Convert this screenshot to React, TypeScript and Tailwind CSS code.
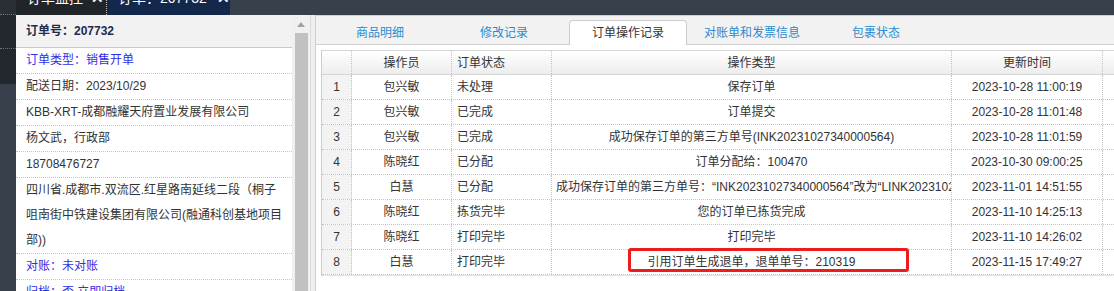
import React from "react";

const rows: [number, string, string, string, string][] = [
  [1, "包兴敏", "未处理", "保存订单", "2023-10-28 11:00:19"],
  [2, "包兴敏", "已完成", "订单提交", "2023-10-28 11:01:48"],
  [3, "包兴敏", "已完成", "成功保存订单的第三方单号(INK20231027340000564)", "2023-10-28 11:01:59"],
  [4, "陈晓红", "已分配", "订单分配给：100470", "2023-10-30 09:00:25"],
  [5, "白慧", "已分配", "成功保存订单的第三方单号：“INK20231027340000564”改为“LINK20231027340000564”", "2023-11-01 14:51:55"],
  [6, "陈晓红", "拣货完毕", "您的订单已拣货完成", "2023-11-10 14:25:13"],
  [7, "陈晓红", "打印完毕", "打印完毕", "2023-11-10 14:26:02"],
  [8, "白慧", "打印完毕", "引用订单生成退单，退单单号：210319", "2023-11-15 17:49:27"],
];

const tabs = ["商品明细", "修改记录", "订单操作记录", "对账单和发票信息", "包裹状态"];

export default function App() {
  return (
    <div className="w-[1114px] h-[291px] overflow-hidden flex bg-white text-[12px] text-[#333] font-['Liberation_Sans','Noto_Sans_CJK_SC',sans-serif]">
      {/* left strip */}
      <div className="w-[16px] shrink-0 flex flex-col bg-[#37404b]">
        <div className="h-[15px] bg-[#2a2f36] border-b border-dotted border-[#6b7079]" />
        <div className="h-[34px] bg-[#23282e] border-b border-dotted border-[#6b7079]" />
        <div className="h-[35px] bg-[#23282e]" />
      </div>

      <div className="flex-1 flex flex-col min-w-0">
        {/* top tabs */}
        <div className="h-[15px] shrink-0 flex bg-[#37404b] overflow-hidden">
          <div className="w-[91px] bg-[#212428] border-r border-dotted border-[#c0c0c0] text-white text-[14px]">
            <div className="h-[30px] -mt-[17px] flex items-center pl-[11px] gap-[8px]">
              <span>订单监控</span>
              <span className="font-bold text-[15px]">✕</span>
            </div>
          </div>
          <div className="w-[123px] bg-[#13284b] text-white text-[14px]">
            <div className="h-[30px] -mt-[17px] flex items-center pl-[11px] gap-[10px]">
              <span>订单：207732</span>
              <span className="font-bold text-[15px]">✕</span>
            </div>
          </div>
        </div>

        <div className="flex-1 flex min-h-0">
          {/* left panel */}
          <div className="w-[276px] shrink-0 bg-white flex flex-col">
            <div className="h-[33px] shrink-0 bg-[#f2f2f2] border-b border-[#c8c8c8] flex items-center pl-[10px] font-bold text-[#1f2c4f]">
              订单号：207732
            </div>
            <div className="px-[10px] leading-[25px] border-b border-dotted border-[#c4c4c4] text-[#2f2fe8]">订单类型：销售开单</div>
            <div className="px-[10px] leading-[25px] border-b border-dotted border-[#c4c4c4]">配送日期：2023/10/29</div>
            <div className="px-[10px] leading-[25px] border-b border-dotted border-[#c4c4c4] whitespace-nowrap">KBB-XRT-成都融耀天府置业发展有限公司</div>
            <div className="px-[10px] leading-[25px] border-b border-dotted border-[#c4c4c4]">杨文武，行政部</div>
            <div className="px-[10px] leading-[25px] border-b border-dotted border-[#c4c4c4]">18708476727</div>
            <div className="px-[10px] leading-[25px] border-b border-dotted border-[#c4c4c4] whitespace-nowrap">
              <div>四川省.成都市.双流区.红星路南延线二段（桐子</div>
              <div>咀南街中铁建设集团有限公司(融通科创基地项目</div>
              <div>部))</div>
            </div>
            <div className="px-[10px] leading-[25px] border-b border-dotted border-[#c4c4c4] text-[#2f2fe8]">对账：未对账</div>
            <div className="px-[10px] leading-[25px] border-b border-dotted border-[#c4c4c4] text-[#2f2fe8]">归档：否 立即归档</div>
          </div>

          {/* scrollbar */}
          <div className="w-[18px] shrink-0 bg-[#f0f0f0] flex flex-col items-center">
            <div className="h-[18px] w-full flex items-center justify-center">
              <svg width="8" height="5" viewBox="0 0 8 5">
                <polygon points="4,0 8,5 0,5" fill="#a3a3a3" />
              </svg>
            </div>
            <div className="w-[13px] flex-1 bg-[#c1c1c1]" />
          </div>
          <div className="w-[1px] shrink-0 bg-[#dcdcdc]" />
          <div className="w-[4px] shrink-0 bg-[#eeeeee]" />

          {/* right panel */}
          <div className="flex-1 min-w-0 flex flex-col bg-white border-l border-[#cfcfcf]">
            <div className="h-[30px] shrink-0 bg-[#f2f2f2] border-t border-b border-[#d0d0d0] flex items-end pl-[5px] gap-[6px]">
              {tabs.map((t, i) =>
                i === 2 ? (
                  <div
                    key={t}
                    className="w-[118px] h-[25px] -mb-[1px] bg-white border border-b-0 border-[#cccccc] rounded-t-[4px] flex items-center justify-center text-[#333]"
                  >
                    {t}
                  </div>
                ) : (
                  <div key={t} className="w-[118px] h-[25px] -mb-[1px] flex items-center justify-center text-[#2a8bd0]">
                    {t}
                  </div>
                )
              )}
            </div>

            {/* table */}
            <div className="mt-[5px] ml-[5px] border-l border-[#cccccc] flex flex-col">
              <div className="h-[25px] flex border-t border-b border-[#d6d6d6] bg-linear-to-b from-white to-[#ededed]">
                <div className="w-[30px] shrink-0 border-r border-dotted border-[#c4c4c4]" />
                <div className="w-[100px] shrink-0 border-r border-dotted border-[#c4c4c4] flex items-center justify-center">操作员</div>
                <div className="w-[100px] shrink-0 border-r border-dotted border-[#c4c4c4] flex items-center pl-[5px]">订单状态</div>
                <div className="w-[400px] shrink-0 border-r border-dotted border-[#c4c4c4] flex items-center justify-center">操作类型</div>
                <div className="w-[151px] shrink-0 border-r border-dotted border-[#c4c4c4] flex items-center justify-center">更新时间</div>
                <div className="flex-1" />
              </div>
              {rows.map(([n, op, st, type, time]) => (
                <div key={n} className="h-[25px] flex border-b border-dotted border-[#c4c4c4]">
                  <div className="w-[30px] shrink-0 bg-[#f3f3f3] border-r border-dotted border-[#c4c4c4] flex items-center justify-center">{n}</div>
                  <div className="w-[100px] shrink-0 border-r border-dotted border-[#c4c4c4] flex items-center justify-center">{op}</div>
                  <div className="w-[100px] shrink-0 border-r border-dotted border-[#c4c4c4] flex items-center pl-[5px]">{st}</div>
                  <div className="w-[400px] shrink-0 border-r border-dotted border-[#c4c4c4] relative flex items-center">
                    <div className="w-full overflow-hidden whitespace-nowrap text-center px-[4px]">{type}</div>
                    {n === 8 && (
                      <div className="absolute left-[76px] top-[-2px] w-[281px] h-[24px] border-[3px] border-[#ee1c1c] rounded-[3px]" />
                    )}
                  </div>
                  <div className="w-[151px] shrink-0 border-r border-dotted border-[#c4c4c4] flex items-center justify-center">{time}</div>
                  <div className="flex-1" />
                </div>
              ))}
              <div className="h-[1px] bg-[#e2e2e2]" />
            </div>
          </div>
        </div>
      </div>
    </div>
  );
}
